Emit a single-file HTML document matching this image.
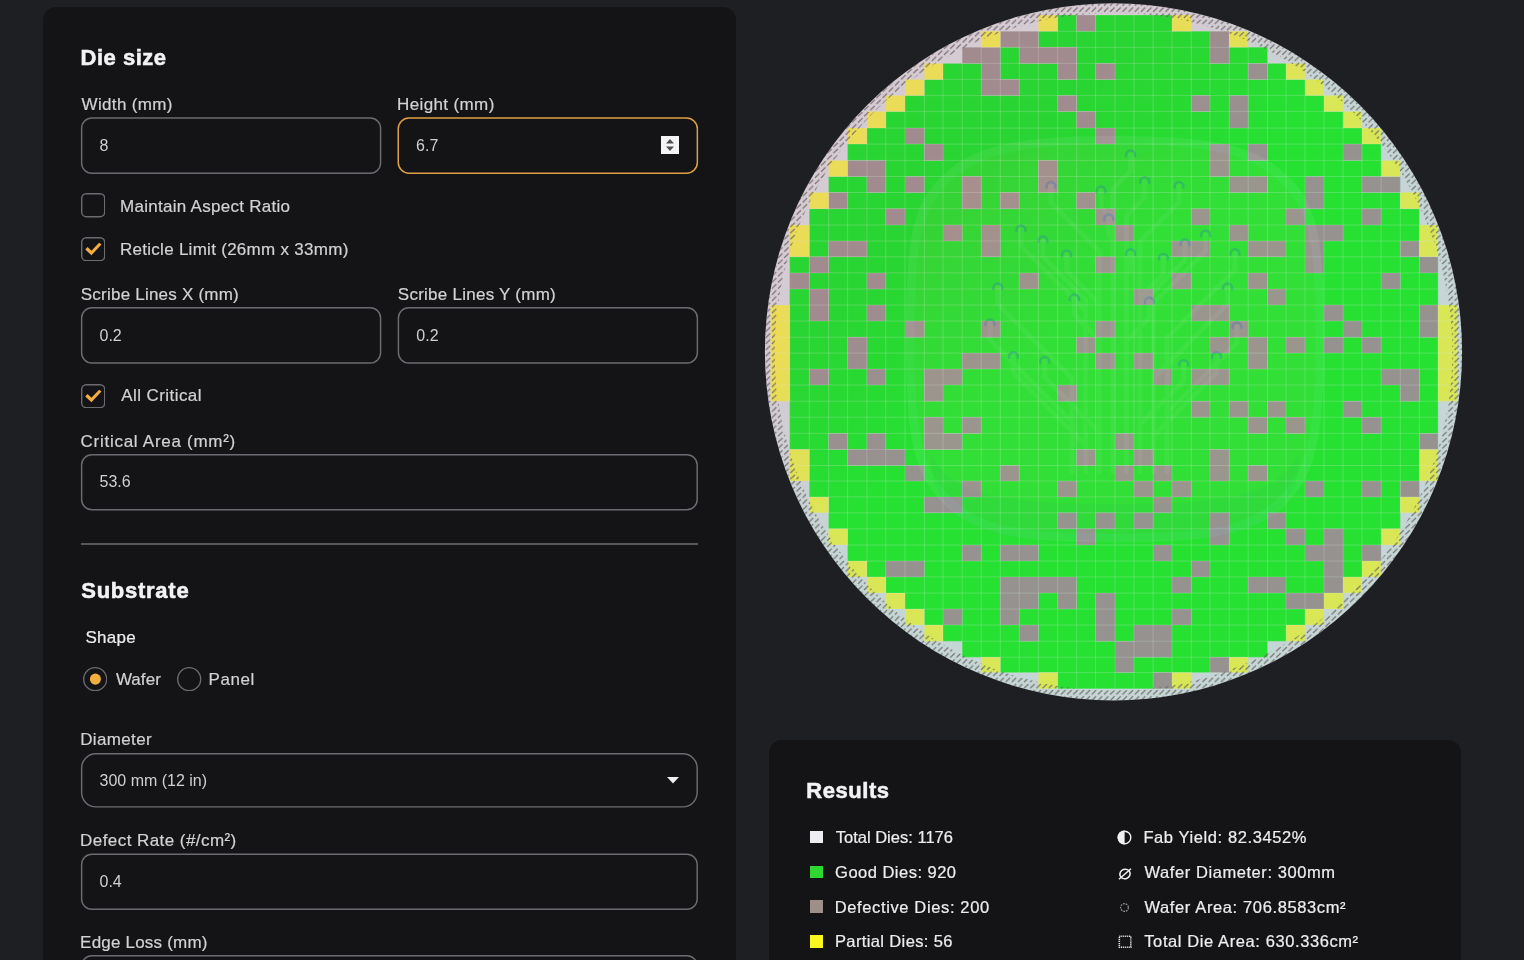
<!DOCTYPE html>
<html lang="en">
<head>
<meta charset="utf-8">
<title>Die Yield Calculator</title>
<style>
*{box-sizing:border-box;margin:0;padding:0}
html,body{width:1524px;height:960px;overflow:hidden;background:#1e1f22}
body{position:relative;will-change:transform;font-family:"Liberation Sans",sans-serif;font-size:17px;color:#cfcfd2;letter-spacing:.22px}
.panel{position:absolute;background:#141416;border-radius:13px}
#left{left:43px;top:7px;width:692.5px;height:1000px}
#res{left:769px;top:740px;width:692px;height:300px}
.abs{position:absolute;white-space:nowrap;line-height:20px}
h2{position:absolute;-webkit-text-stroke:.55px #f3f3f5;font-size:22px;font-weight:bold;color:#f3f3f5;letter-spacing:.32px;line-height:26px;white-space:nowrap}
.lbl{position:absolute;white-space:nowrap;line-height:20px;color:#d2d2d5;-webkit-text-stroke:.2px #d2d2d5}
.val{position:absolute;white-space:nowrap;font-size:16px;letter-spacing:0;line-height:20px;color:#cfcfd2}
.cb{position:absolute;left:81px;width:23.5px;height:23.5px;border:1.3px solid #68686d;border-radius:5.5px}
.cb svg{position:absolute;left:0;top:0}
.rad{position:absolute;width:23.6px;height:23.6px;border:1.3px solid #68686d;border-radius:50%}
.rad i{position:absolute;left:5px;top:5px;width:11px;height:11px;border-radius:50%;background:#f5ab3d}
hr{position:absolute;left:81px;top:543.3px;width:616.5px;height:1.5px;border:0;background:#56565b}
.sq{position:absolute;left:810px;width:12.8px;height:12.4px}
.r{position:absolute;white-space:nowrap;line-height:20px;color:#ededf0;font-size:16.5px;-webkit-text-stroke:.22px #ededf0}
.sq2{font-size:1.25em;line-height:0;position:relative;top:.12em}
.ic{position:absolute}
</style>
</head>
<body>

<div class="panel" id="left"></div>
<div class="panel" id="res"></div>


<svg class="ic" style="left:661px;top:136px" width="18" height="18" viewBox="0 0 18 18"><rect width="18" height="18" fill="#f4f4f6"/><path d="M5 7.5L9 3.1l4 4.4zM5 10.5L9 14.9l4-4.4z" fill="#505052"/></svg>

<svg class="ic" style="left:80.8px;top:193.4px" width="24.4" height="24.4" viewBox="0 0 24.4 24.4"><rect x=".7" y=".7" width="23" height="23" rx="4.6" fill="none" stroke="#6a6c72" stroke-width="1.4"/></svg>

<svg class="ic" style="left:80.8px;top:236.8px" width="24.4" height="24.4" viewBox="0 0 24.4 24.4"><rect x=".7" y=".7" width="23" height="23" rx="4.6" fill="none" stroke="#6a6c72" stroke-width="1.4"/><polygon points="4.26,12.4 6.56,10.1 10.46,13.65 18.1,5.67 20.46,7.62 10.46,18.26" fill="#f4ae3e"/></svg>


<svg class="ic" style="left:80.8px;top:383.8px" width="24.4" height="24.4" viewBox="0 0 24.4 24.4"><rect x=".7" y=".7" width="23" height="23" rx="4.6" fill="none" stroke="#6a6c72" stroke-width="1.4"/><polygon points="4.26,12.4 6.56,10.1 10.46,13.65 18.1,5.67 20.46,7.62 10.46,18.26" fill="#f4ae3e"/></svg>


<hr>

<svg class="ic" style="left:82.95px;top:666.7px" width="24.4" height="24.4" viewBox="0 0 24.4 24.4"><circle cx="12.2" cy="12.2" r="11.5" fill="none" stroke="#6a6c72" stroke-width="1.35"/><circle cx="12.4" cy="12.1" r="5.55" fill="#f4ae3e"/></svg>
<svg class="ic" style="left:177.3px;top:666.7px" width="24.4" height="24.4" viewBox="0 0 24.4 24.4"><circle cx="12.2" cy="12.2" r="11.5" fill="none" stroke="#6a6c72" stroke-width="1.35"/></svg>

<svg class="ic" style="left:666px;top:776px" width="14" height="8" viewBox="0 0 14 8"><path d="M1 1h12L7 7.4z" fill="#f0f0f2"/></svg>



<svg class="ic" style="left:0;top:0" width="740" height="960" viewBox="0 0 740 960">
<rect x="81.62" y="118.02" width="298.95" height="55.15" rx="10.28" fill="none" stroke="#6a6c72" stroke-width="1.45"/>
<rect x="398.25" y="118.05" width="299.10" height="55.10" rx="10.75" fill="none" stroke="#dea046" stroke-width="1.5"/>
<rect x="81.62" y="307.83" width="298.95" height="55.15" rx="10.28" fill="none" stroke="#6a6c72" stroke-width="1.45"/>
<rect x="398.43" y="307.83" width="298.95" height="55.15" rx="10.28" fill="none" stroke="#6a6c72" stroke-width="1.45"/>
<rect x="81.62" y="454.83" width="615.55" height="54.95" rx="10.28" fill="none" stroke="#6a6c72" stroke-width="1.45"/>
<rect x="81.62" y="753.73" width="615.55" height="53.15" rx="14.28" fill="none" stroke="#6a6c72" stroke-width="1.45"/>
<rect x="81.62" y="854.23" width="615.55" height="54.95" rx="10.28" fill="none" stroke="#6a6c72" stroke-width="1.45"/>
<rect x="81.62" y="955.73" width="615.55" height="54.95" rx="10.28" fill="none" stroke="#6a6c72" stroke-width="1.45"/>
</svg>
<div class="val" style="left:99.5px;top:136px">8</div>
<div class="val" style="left:416.1px;top:136px">6.7</div>
<div class="val" style="left:99.5px;top:326px">0.2</div>
<div class="val" style="left:416.3px;top:326px">0.2</div>
<div class="val" style="left:99.5px;top:472px">53.6</div>
<div class="val" style="left:99.5px;top:771px">300 mm (12 in)</div>
<div class="val" style="left:99.5px;top:872px">0.4</div>
<div class="val" style="left:99.5px;top:973px">5</div>
<h2 id="t_die" style="left:80.53px;top:45px;letter-spacing:0.521px;">Die size</h2>
<div id="t_w" class="lbl" style="left:81.55px;top:95px;letter-spacing:0.338px;">Width (mm)</div>
<div id="t_h" class="lbl" style="left:397.11px;top:95px;letter-spacing:0.368px;">Height (mm)</div>
<div id="t_mar" class="lbl" style="left:119.96px;top:197px;letter-spacing:0.283px;">Maintain Aspect Ratio</div>
<div id="t_ret" class="lbl" style="left:119.96px;top:240px;letter-spacing:0.281px;">Reticle Limit (26mm x 33mm)</div>
<div id="t_sx" class="lbl" style="left:80.81px;top:285px;letter-spacing:0.221px;">Scribe Lines X (mm)</div>
<div id="t_sy" class="lbl" style="left:397.81px;top:285px;letter-spacing:0.253px;">Scribe Lines Y (mm)</div>
<div id="t_ac" class="lbl" style="left:121.15px;top:386px;letter-spacing:0.440px;">All Critical</div>
<div id="t_ca" class="lbl" style="left:80.61px;top:432px;letter-spacing:0.721px;">Critical Area (mm²)</div>
<h2 id="t_sub" style="left:81.24px;top:578px;letter-spacing:0.743px;">Substrate</h2>
<div id="t_shape" class="lbl" style="left:85.43px;top:628px;letter-spacing:0.271px;color:#ededf0;-webkit-text-stroke-color:#ededf0">Shape</div>
<div id="t_wafer" class="lbl" style="left:115.88px;top:670px;letter-spacing:0.057px;">Wafer</div>
<div id="t_panel" class="lbl" style="left:208.59px;top:670px;letter-spacing:0.539px;">Panel</div>
<div id="t_dia" class="lbl" style="left:80.13px;top:730px;letter-spacing:0.369px;">Diameter</div>
<div id="t_dr" class="lbl" style="left:80.12px;top:831px;letter-spacing:0.434px;">Defect Rate (#/cm²)</div>
<div id="t_el" class="lbl" style="left:80.12px;top:933px;letter-spacing:0.204px;">Edge Loss (mm)</div>
<h2 id="t_res" style="left:806.33px;top:778px;letter-spacing:0.550px;">Results</h2>
<div id="t_td" class="r" style="left:835.69px;top:827px;letter-spacing:0.012px;">Total Dies: 1176</div>
<div id="t_gd" class="r" style="left:835.08px;top:862px;letter-spacing:0.483px;">Good Dies: 920</div>
<div id="t_dd" class="r" style="left:834.68px;top:897px;letter-spacing:0.633px;">Defective Dies: 200</div>
<div id="t_pd" class="r" style="left:834.96px;top:931px;letter-spacing:0.376px;">Partial Dies: 56</div>
<div id="t_fy" class="r" style="left:1143.40px;top:827px;letter-spacing:0.598px;">Fab Yield: 82.3452%</div>
<div id="t_wd" class="r" style="left:1144.46px;top:862px;letter-spacing:0.577px;">Wafer Diameter: 300mm</div>
<div id="t_wa" class="r" style="left:1144.46px;top:897px;letter-spacing:0.625px;">Wafer Area: 706.8583cm²</div>
<div id="t_ta" class="r" style="left:1144.28px;top:931px;letter-spacing:0.593px;">Total Die Area: 630.336cm²</div>
<svg id="wafer" width="720" height="720" viewBox="750 -8 720 720" style="position:absolute;left:750px;top:-8px">
<defs>
<clipPath id="wc"><circle cx="1113.5" cy="351.8" r="348.6"/></clipPath>
<clipPath id="dc"><path d="M1038.4 15H1191.3V31.25H1038.4zM981.2 31.25H1248.2V47.25H981.2zM962.2 47.25H1267.5V63.4H962.2zM924.3 63.4H1305V79.4H924.3zM905 79.4H1324V95.6H905zM885.8 95.6H1343V111.6H885.8zM866.9 111.6H1362V128.1H866.9zM847.6 128.1H1381.1V144.1H847.6zM847.6 144.1H1381.1V160.4H847.6zM828.6 160.4H1400.3V176.5H828.6zM828.6 176.5H1400.3V192.5H828.6zM809.3 192.5H1419.4V208.75H809.3zM809.3 208.75H1419.4V225H809.3zM789.7 225H1438.1V241H789.7zM789.7 241H1438.1V256.8H789.7zM789.7 256.8H1438.1V272.9H789.7zM789.7 272.9H1438.1V289H789.7zM789.7 289H1438.1V305H789.7zM770.6 305H1457V321H770.6zM770.6 321H1457V337.2H770.6zM770.6 337.2H1457V353.1H770.6zM770.6 353.1H1457V369H770.6zM770.6 369H1457V385H770.6zM770.6 385H1457V401.2H770.6zM789.7 401.2H1438.1V417.2H789.7zM789.7 417.2H1438.1V433.4H789.7zM789.7 433.4H1438.1V449.4H789.7zM789.7 449.4H1438.1V465.5H789.7zM789.7 465.5H1438.1V481H789.7zM809.3 481H1419.4V496.9H809.3zM809.3 496.9H1419.4V512.8H809.3zM828.6 512.8H1400.3V528.8H828.6zM828.6 528.8H1400.3V545H828.6zM847.6 545H1381.1V561H847.6zM847.6 561H1381.1V576.9H847.6zM866.9 576.9H1362V593.1H866.9zM885.8 593.1H1343V609H885.8zM905 609H1324V625H905zM924.3 625H1305V641.2H924.3zM962.2 641.2H1267.5V657.2H962.2zM981.2 657.2H1248.2V672.6H981.2zM1038.4 672.6H1191.3V688.75H1038.4z"/></clipPath>
<pattern id="hatch" width="6.15" height="6.15" patternUnits="userSpaceOnUse" patternTransform="translate(2.3 .4)"><path d="M.85 5.3L5.3 .85" stroke="#6a605e" stroke-opacity=".85" stroke-width="1.15" stroke-linecap="butt"/></pattern>
<linearGradient id="irid" gradientUnits="userSpaceOnUse" x1="881.8" y1="91.1" x2="1345.2" y2="612.5"><stop offset="0" stop-color="#fff3fc"/><stop offset=".2" stop-color="#fff3fc"/><stop offset=".42" stop-color="#edfffe"/><stop offset="1" stop-color="#edfffe"/></linearGradient>
</defs>
<g clip-path="url(#wc)">
<circle cx="1113.5" cy="351.8" r="349.6" fill="#d5d5d6"/>
<path d="M1057.7 15H1076.6V31.25H1057.7zM1095.6 15H1172V31.25H1095.6zM1038.4 31.25H1210V47.25H1038.4zM1000.3 47.25H1019.2V63.4H1000.3zM1076.6 47.25H1210V63.4H1076.6zM1229.2 47.25H1267.5V63.4H1229.2zM943 63.4H981.2V79.4H943zM1000.3 63.4H1057.7V79.4H1000.3zM1076.6 63.4H1095.6V79.4H1076.6zM1115 63.4H1248.2V79.4H1115zM1267.5 63.4H1286V79.4H1267.5zM924.3 79.4H981.2V95.6H924.3zM1019.2 79.4H1305V95.6H1019.2zM905 95.6H1057.7V111.6H905zM1076.6 95.6H1191.3V111.6H1076.6zM1210 95.6H1229.2V111.6H1210zM1248.2 95.6H1324V111.6H1248.2zM885.8 111.6H1076.6V128.1H885.8zM1095.6 111.6H1229.2V128.1H1095.6zM1248.2 111.6H1343V128.1H1248.2zM866.9 128.1H905V144.1H866.9zM924.3 128.1H1095.6V144.1H924.3zM1115 128.1H1362V144.1H1115zM847.6 144.1H924.3V160.4H847.6zM943 144.1H1210V160.4H943zM1229.2 144.1H1248.2V160.4H1229.2zM1267.5 144.1H1343V160.4H1267.5zM1362 144.1H1381.1V160.4H1362zM885.8 160.4H1038.4V176.5H885.8zM1057.7 160.4H1210V176.5H1057.7zM1229.2 160.4H1381.1V176.5H1229.2zM828.6 176.5H866.9V192.5H828.6zM885.8 176.5H905V192.5H885.8zM924.3 176.5H962.2V192.5H924.3zM981.2 176.5H1038.4V192.5H981.2zM1057.7 176.5H1229.2V192.5H1057.7zM1267.5 176.5H1305V192.5H1267.5zM1324 176.5H1362V192.5H1324zM847.6 192.5H962.2V208.75H847.6zM981.2 192.5H1000.3V208.75H981.2zM1019.2 192.5H1076.6V208.75H1019.2zM1095.6 192.5H1305V208.75H1095.6zM1324 192.5H1400.3V208.75H1324zM809.3 208.75H885.8V225H809.3zM905 208.75H1095.6V225H905zM1115 208.75H1191.3V225H1115zM1210 208.75H1286V225H1210zM1305 208.75H1362V225H1305zM1381.1 208.75H1419.4V225H1381.1zM809.3 225H943V241H809.3zM962.2 225H981.2V241H962.2zM1000.3 225H1115V241H1000.3zM1134 225H1229.2V241H1134zM1248.2 225H1305V241H1248.2zM1343 225H1419.4V241H1343zM809.3 241H828.6V256.8H809.3zM866.9 241H981.2V256.8H866.9zM1000.3 241H1172V256.8H1000.3zM1210 241H1248.2V256.8H1210zM1286 241H1305V256.8H1286zM1324 241H1400.3V256.8H1324zM789.7 256.8H809.3V272.9H789.7zM828.6 256.8H1095.6V272.9H828.6zM1115 256.8H1305V272.9H1115zM1324 256.8H1419.4V272.9H1324zM809.3 272.9H866.9V289H809.3zM885.8 272.9H1019.2V289H885.8zM1038.4 272.9H1172V289H1038.4zM1191.3 272.9H1248.2V289H1191.3zM1267.5 272.9H1381.1V289H1267.5zM1400.3 272.9H1438.1V289H1400.3zM789.7 289H809.3V305H789.7zM828.6 289H1134V305H828.6zM1153.1 289H1267.5V305H1153.1zM1286 289H1438.1V305H1286zM789.7 305H809.3V321H789.7zM828.6 305H866.9V321H828.6zM885.8 305H1191.3V321H885.8zM1229.2 305H1324V321H1229.2zM1343 305H1419.4V321H1343zM789.7 321H905V337.2H789.7zM924.3 321H981.2V337.2H924.3zM1000.3 321H1095.6V337.2H1000.3zM1115 321H1229.2V337.2H1115zM1248.2 321H1343V337.2H1248.2zM1362 321H1419.4V337.2H1362zM789.7 337.2H847.6V353.1H789.7zM866.9 337.2H1076.6V353.1H866.9zM1095.6 337.2H1210V353.1H1095.6zM1229.2 337.2H1248.2V353.1H1229.2zM1267.5 337.2H1286V353.1H1267.5zM1305 337.2H1324V353.1H1305zM1343 337.2H1362V353.1H1343zM1381.1 337.2H1438.1V353.1H1381.1zM789.7 353.1H847.6V369H789.7zM866.9 353.1H962.2V369H866.9zM1000.3 353.1H1095.6V369H1000.3zM1115 353.1H1134V369H1115zM1153.1 353.1H1248.2V369H1153.1zM1267.5 353.1H1438.1V369H1267.5zM789.7 369H809.3V385H789.7zM828.6 369H866.9V385H828.6zM885.8 369H924.3V385H885.8zM962.2 369H1153.1V385H962.2zM1172 369H1191.3V385H1172zM1229.2 369H1381.1V385H1229.2zM1419.4 369H1438.1V385H1419.4zM789.7 385H924.3V401.2H789.7zM943 385H1057.7V401.2H943zM1076.6 385H1400.3V401.2H1076.6zM1419.4 385H1438.1V401.2H1419.4zM789.7 401.2H1191.3V417.2H789.7zM1210 401.2H1229.2V417.2H1210zM1248.2 401.2H1267.5V417.2H1248.2zM1286 401.2H1343V417.2H1286zM1362 401.2H1438.1V417.2H1362zM789.7 417.2H924.3V433.4H789.7zM943 417.2H962.2V433.4H943zM981.2 417.2H1248.2V433.4H981.2zM1267.5 417.2H1286V433.4H1267.5zM1305 417.2H1362V433.4H1305zM1381.1 417.2H1438.1V433.4H1381.1zM789.7 433.4H828.6V449.4H789.7zM847.6 433.4H866.9V449.4H847.6zM885.8 433.4H924.3V449.4H885.8zM962.2 433.4H1115V449.4H962.2zM1134 433.4H1419.4V449.4H1134zM809.3 449.4H847.6V465.5H809.3zM905 449.4H1076.6V465.5H905zM1095.6 449.4H1134V465.5H1095.6zM1153.1 449.4H1210V465.5H1153.1zM1229.2 449.4H1419.4V465.5H1229.2zM809.3 465.5H905V481H809.3zM924.3 465.5H1000.3V481H924.3zM1019.2 465.5H1115V481H1019.2zM1134 465.5H1153.1V481H1134zM1172 465.5H1210V481H1172zM1229.2 465.5H1248.2V481H1229.2zM1267.5 465.5H1419.4V481H1267.5zM809.3 481H962.2V496.9H809.3zM981.2 481H1057.7V496.9H981.2zM1076.6 481H1134V496.9H1076.6zM1153.1 481H1172V496.9H1153.1zM1191.3 481H1305V496.9H1191.3zM1324 481H1362V496.9H1324zM1381.1 481H1400.3V496.9H1381.1zM828.6 496.9H924.3V512.8H828.6zM962.2 496.9H1153.1V512.8H962.2zM1172 496.9H1400.3V512.8H1172zM828.6 512.8H1057.7V528.8H828.6zM1076.6 512.8H1095.6V528.8H1076.6zM1115 512.8H1134V528.8H1115zM1153.1 512.8H1210V528.8H1153.1zM1229.2 512.8H1267.5V528.8H1229.2zM1286 512.8H1400.3V528.8H1286zM847.6 528.8H1076.6V545H847.6zM1095.6 528.8H1210V545H1095.6zM1229.2 528.8H1286V545H1229.2zM1305 528.8H1324V545H1305zM1343 528.8H1381.1V545H1343zM847.6 545H962.2V561H847.6zM981.2 545H1000.3V561H981.2zM1038.4 545H1153.1V561H1038.4zM1172 545H1305V561H1172zM1343 545H1362V561H1343zM866.9 561H885.8V576.9H866.9zM924.3 561H1191.3V576.9H924.3zM1210 561H1324V576.9H1210zM1343 561H1362V576.9H1343zM885.8 576.9H1000.3V593.1H885.8zM1076.6 576.9H1172V593.1H1076.6zM1191.3 576.9H1248.2V593.1H1191.3zM1286 576.9H1324V593.1H1286zM905 593.1H1000.3V609H905zM1038.4 593.1H1057.7V609H1038.4zM1076.6 593.1H1095.6V609H1076.6zM1115 593.1H1286V609H1115zM924.3 609H943V625H924.3zM962.2 609H1000.3V625H962.2zM1019.2 609H1095.6V625H1019.2zM1115 609H1172V625H1115zM1191.3 609H1305V625H1191.3zM943 625H1019.2V641.2H943zM1038.4 625H1095.6V641.2H1038.4zM1115 625H1134V641.2H1115zM1172 625H1286V641.2H1172zM962.2 641.2H1115V657.2H962.2zM1172 641.2H1267.5V657.2H1172zM1000.3 657.2H1115V672.6H1000.3zM1134 657.2H1210V672.6H1134zM1057.7 672.6H1153.1V688.75H1057.7z" fill="#29e032"/>
<path d="M1076.6 15H1095.6V31.25H1076.6zM1000.3 31.25H1038.4V47.25H1000.3zM1210 31.25H1229.2V47.25H1210zM962.2 47.25H1000.3V63.4H962.2zM1019.2 47.25H1076.6V63.4H1019.2zM1210 47.25H1229.2V63.4H1210zM981.2 63.4H1000.3V79.4H981.2zM1057.7 63.4H1076.6V79.4H1057.7zM1095.6 63.4H1115V79.4H1095.6zM1248.2 63.4H1267.5V79.4H1248.2zM981.2 79.4H1019.2V95.6H981.2zM1057.7 95.6H1076.6V111.6H1057.7zM1191.3 95.6H1210V111.6H1191.3zM1229.2 95.6H1248.2V111.6H1229.2zM1076.6 111.6H1095.6V128.1H1076.6zM1229.2 111.6H1248.2V128.1H1229.2zM905 128.1H924.3V144.1H905zM1095.6 128.1H1115V144.1H1095.6zM924.3 144.1H943V160.4H924.3zM1210 144.1H1229.2V160.4H1210zM1248.2 144.1H1267.5V160.4H1248.2zM1343 144.1H1362V160.4H1343zM847.6 160.4H885.8V176.5H847.6zM1038.4 160.4H1057.7V176.5H1038.4zM1210 160.4H1229.2V176.5H1210zM866.9 176.5H885.8V192.5H866.9zM905 176.5H924.3V192.5H905zM962.2 176.5H981.2V192.5H962.2zM1038.4 176.5H1057.7V192.5H1038.4zM1229.2 176.5H1267.5V192.5H1229.2zM1305 176.5H1324V192.5H1305zM1362 176.5H1400.3V192.5H1362zM828.6 192.5H847.6V208.75H828.6zM962.2 192.5H981.2V208.75H962.2zM1000.3 192.5H1019.2V208.75H1000.3zM1076.6 192.5H1095.6V208.75H1076.6zM1305 192.5H1324V208.75H1305zM885.8 208.75H905V225H885.8zM1095.6 208.75H1115V225H1095.6zM1191.3 208.75H1210V225H1191.3zM1286 208.75H1305V225H1286zM1362 208.75H1381.1V225H1362zM943 225H962.2V241H943zM981.2 225H1000.3V241H981.2zM1115 225H1134V241H1115zM1229.2 225H1248.2V241H1229.2zM1305 225H1343V241H1305zM828.6 241H866.9V256.8H828.6zM981.2 241H1000.3V256.8H981.2zM1172 241H1210V256.8H1172zM1248.2 241H1286V256.8H1248.2zM1305 241H1324V256.8H1305zM1400.3 241H1419.4V256.8H1400.3zM809.3 256.8H828.6V272.9H809.3zM1095.6 256.8H1115V272.9H1095.6zM1305 256.8H1324V272.9H1305zM1419.4 256.8H1438.1V272.9H1419.4zM789.7 272.9H809.3V289H789.7zM866.9 272.9H885.8V289H866.9zM1019.2 272.9H1038.4V289H1019.2zM1172 272.9H1191.3V289H1172zM1248.2 272.9H1267.5V289H1248.2zM1381.1 272.9H1400.3V289H1381.1zM809.3 289H828.6V305H809.3zM1134 289H1153.1V305H1134zM1267.5 289H1286V305H1267.5zM809.3 305H828.6V321H809.3zM866.9 305H885.8V321H866.9zM1191.3 305H1229.2V321H1191.3zM1324 305H1343V321H1324zM1419.4 305H1438.1V321H1419.4zM905 321H924.3V337.2H905zM981.2 321H1000.3V337.2H981.2zM1095.6 321H1115V337.2H1095.6zM1229.2 321H1248.2V337.2H1229.2zM1343 321H1362V337.2H1343zM1419.4 321H1438.1V337.2H1419.4zM847.6 337.2H866.9V353.1H847.6zM1076.6 337.2H1095.6V353.1H1076.6zM1210 337.2H1229.2V353.1H1210zM1248.2 337.2H1267.5V353.1H1248.2zM1286 337.2H1305V353.1H1286zM1324 337.2H1343V353.1H1324zM1362 337.2H1381.1V353.1H1362zM847.6 353.1H866.9V369H847.6zM962.2 353.1H1000.3V369H962.2zM1095.6 353.1H1115V369H1095.6zM1134 353.1H1153.1V369H1134zM1248.2 353.1H1267.5V369H1248.2zM809.3 369H828.6V385H809.3zM866.9 369H885.8V385H866.9zM924.3 369H962.2V385H924.3zM1153.1 369H1172V385H1153.1zM1191.3 369H1229.2V385H1191.3zM1381.1 369H1419.4V385H1381.1zM924.3 385H943V401.2H924.3zM1057.7 385H1076.6V401.2H1057.7zM1400.3 385H1419.4V401.2H1400.3zM1191.3 401.2H1210V417.2H1191.3zM1229.2 401.2H1248.2V417.2H1229.2zM1267.5 401.2H1286V417.2H1267.5zM1343 401.2H1362V417.2H1343zM924.3 417.2H943V433.4H924.3zM962.2 417.2H981.2V433.4H962.2zM1248.2 417.2H1267.5V433.4H1248.2zM1286 417.2H1305V433.4H1286zM1362 417.2H1381.1V433.4H1362zM828.6 433.4H847.6V449.4H828.6zM866.9 433.4H885.8V449.4H866.9zM924.3 433.4H962.2V449.4H924.3zM1115 433.4H1134V449.4H1115zM1419.4 433.4H1438.1V449.4H1419.4zM847.6 449.4H905V465.5H847.6zM1076.6 449.4H1095.6V465.5H1076.6zM1134 449.4H1153.1V465.5H1134zM1210 449.4H1229.2V465.5H1210zM905 465.5H924.3V481H905zM1000.3 465.5H1019.2V481H1000.3zM1115 465.5H1134V481H1115zM1153.1 465.5H1172V481H1153.1zM1210 465.5H1229.2V481H1210zM1248.2 465.5H1267.5V481H1248.2zM962.2 481H981.2V496.9H962.2zM1057.7 481H1076.6V496.9H1057.7zM1134 481H1153.1V496.9H1134zM1172 481H1191.3V496.9H1172zM1305 481H1324V496.9H1305zM1362 481H1381.1V496.9H1362zM1400.3 481H1419.4V496.9H1400.3zM924.3 496.9H962.2V512.8H924.3zM1153.1 496.9H1172V512.8H1153.1zM1057.7 512.8H1076.6V528.8H1057.7zM1095.6 512.8H1115V528.8H1095.6zM1134 512.8H1153.1V528.8H1134zM1210 512.8H1229.2V528.8H1210zM1267.5 512.8H1286V528.8H1267.5zM1076.6 528.8H1095.6V545H1076.6zM1210 528.8H1229.2V545H1210zM1286 528.8H1305V545H1286zM1324 528.8H1343V545H1324zM962.2 545H981.2V561H962.2zM1000.3 545H1038.4V561H1000.3zM1153.1 545H1172V561H1153.1zM1305 545H1343V561H1305zM1362 545H1381.1V561H1362zM885.8 561H924.3V576.9H885.8zM1191.3 561H1210V576.9H1191.3zM1324 561H1343V576.9H1324zM1000.3 576.9H1076.6V593.1H1000.3zM1172 576.9H1191.3V593.1H1172zM1248.2 576.9H1286V593.1H1248.2zM1324 576.9H1343V593.1H1324zM1000.3 593.1H1038.4V609H1000.3zM1057.7 593.1H1076.6V609H1057.7zM1095.6 593.1H1115V609H1095.6zM1286 593.1H1324V609H1286zM943 609H962.2V625H943zM1000.3 609H1019.2V625H1000.3zM1095.6 609H1115V625H1095.6zM1172 609H1191.3V625H1172zM1019.2 625H1038.4V641.2H1019.2zM1095.6 625H1115V641.2H1095.6zM1134 625H1172V641.2H1134zM1115 641.2H1172V657.2H1115zM1115 657.2H1134V672.6H1115zM1210 657.2H1229.2V672.6H1210zM1153.1 672.6H1172V688.75H1153.1z" fill="#a19290"/>
<path d="M1038.4 15H1057.7V31.25H1038.4zM1172 15H1191.3V31.25H1172zM981.2 31.25H1000.3V47.25H981.2zM1229.2 31.25H1248.2V47.25H1229.2zM924.3 63.4H943V79.4H924.3zM1286 63.4H1305V79.4H1286zM905 79.4H924.3V95.6H905zM1305 79.4H1324V95.6H1305zM885.8 95.6H905V111.6H885.8zM1324 95.6H1343V111.6H1324zM866.9 111.6H885.8V128.1H866.9zM1343 111.6H1362V128.1H1343zM847.6 128.1H866.9V144.1H847.6zM1362 128.1H1381.1V144.1H1362zM828.6 160.4H847.6V176.5H828.6zM1381.1 160.4H1400.3V176.5H1381.1zM809.3 192.5H828.6V208.75H809.3zM1400.3 192.5H1419.4V208.75H1400.3zM789.7 225H809.3V241H789.7zM1419.4 225H1438.1V241H1419.4zM789.7 241H809.3V256.8H789.7zM1419.4 241H1438.1V256.8H1419.4zM770.6 305H789.7V321H770.6zM1438.1 305H1457V321H1438.1zM770.6 321H789.7V337.2H770.6zM1438.1 321H1457V337.2H1438.1zM770.6 337.2H789.7V353.1H770.6zM1438.1 337.2H1457V353.1H1438.1zM770.6 353.1H789.7V369H770.6zM1438.1 353.1H1457V369H1438.1zM770.6 369H789.7V385H770.6zM1438.1 369H1457V385H1438.1zM770.6 385H789.7V401.2H770.6zM1438.1 385H1457V401.2H1438.1zM789.7 449.4H809.3V465.5H789.7zM1419.4 449.4H1438.1V465.5H1419.4zM789.7 465.5H809.3V481H789.7zM1419.4 465.5H1438.1V481H1419.4zM809.3 496.9H828.6V512.8H809.3zM1400.3 496.9H1419.4V512.8H1400.3zM828.6 528.8H847.6V545H828.6zM1381.1 528.8H1400.3V545H1381.1zM847.6 561H866.9V576.9H847.6zM1362 561H1381.1V576.9H1362zM866.9 576.9H885.8V593.1H866.9zM1343 576.9H1362V593.1H1343zM885.8 593.1H905V609H885.8zM1324 593.1H1343V609H1324zM905 609H924.3V625H905zM1305 609H1324V625H1305zM924.3 625H943V641.2H924.3zM1286 625H1305V641.2H1286zM981.2 657.2H1000.3V672.6H981.2zM1229.2 657.2H1248.2V672.6H1229.2zM1038.4 672.6H1057.7V688.75H1038.4zM1172 672.6H1191.3V688.75H1172z" fill="#eae757"/>
<path d="M770.6 15V688.75M789.7 15V688.75M809.3 15V688.75M828.6 15V688.75M847.6 15V688.75M866.9 15V688.75M885.8 15V688.75M905 15V688.75M924.3 15V688.75M943 15V688.75M962.2 15V688.75M981.2 15V688.75M1000.3 15V688.75M1019.2 15V688.75M1038.4 15V688.75M1057.7 15V688.75M1076.6 15V688.75M1095.6 15V688.75M1115 15V688.75M1134 15V688.75M1153.1 15V688.75M1172 15V688.75M1191.3 15V688.75M1210 15V688.75M1229.2 15V688.75M1248.2 15V688.75M1267.5 15V688.75M1286 15V688.75M1305 15V688.75M1324 15V688.75M1343 15V688.75M1362 15V688.75M1381.1 15V688.75M1400.3 15V688.75M1419.4 15V688.75M1438.1 15V688.75M1457 15V688.75M770.6 15H1457M770.6 31.25H1457M770.6 47.25H1457M770.6 63.4H1457M770.6 79.4H1457M770.6 95.6H1457M770.6 111.6H1457M770.6 128.1H1457M770.6 144.1H1457M770.6 160.4H1457M770.6 176.5H1457M770.6 192.5H1457M770.6 208.75H1457M770.6 225H1457M770.6 241H1457M770.6 256.8H1457M770.6 272.9H1457M770.6 289H1457M770.6 305H1457M770.6 321H1457M770.6 337.2H1457M770.6 353.1H1457M770.6 369H1457M770.6 385H1457M770.6 401.2H1457M770.6 417.2H1457M770.6 433.4H1457M770.6 449.4H1457M770.6 465.5H1457M770.6 481H1457M770.6 496.9H1457M770.6 512.8H1457M770.6 528.8H1457M770.6 545H1457M770.6 561H1457M770.6 576.9H1457M770.6 593.1H1457M770.6 609H1457M770.6 625H1457M770.6 641.2H1457M770.6 657.2H1457M770.6 672.6H1457M770.6 688.75H1457" stroke="#e8f0e8" stroke-opacity=".24" stroke-width="1" fill="none" clip-path="url(#dc)"/>
<path d="M1115 136C1230 136 1262 150 1292 180C1320 210 1324 250 1324 338C1324 430 1318 470 1290 500C1258 534 1220 542 1115 542C1010 542 972 534 940 500C912 470 906 430 906 338C906 250 910 210 938 180C968 150 1000 136 1115 136zM1115 144.53C1225.17 144.53 1255.83 157.94 1284.57 186.68C1311.39 215.42 1315.22 253.74 1315.22 338.04C1315.22 426.18 1309.47 464.5 1282.65 493.24C1251.99 525.81 1215.59 533.47 1115 533.47C1014.41 533.47 978.01 525.81 947.35 493.24C920.53 464.5 914.78 426.18 914.78 338.04C914.78 253.74 918.61 215.42 945.43 186.68C974.17 157.94 1004.83 144.53 1115 144.53z" fill-rule="evenodd" fill="#ffffff" fill-opacity=".075"/><path d="M1115 144.53C1225.17 144.53 1255.83 157.94 1284.57 186.68C1311.39 215.42 1315.22 253.74 1315.22 338.04C1315.22 426.18 1309.47 464.5 1282.65 493.24C1251.99 525.81 1215.59 533.47 1115 533.47C1014.41 533.47 978.01 525.81 947.35 493.24C920.53 464.5 914.78 426.18 914.78 338.04C914.78 253.74 918.61 215.42 945.43 186.68C974.17 157.94 1004.83 144.53 1115 144.53z" fill="#ffe178" fill-opacity=".06"/><path d="M930 452C950 492 990 504 1115 504C1240 504 1280 492 1300 452C1300 500 1270 528 1220 536C1180 542 1050 542 1010 536C960 528 930 500 930 452z" fill="#2060d0" fill-opacity=".038"/><path d="M990 324V340L1072 422V472M997.8 288V304L1072 378.2V472M1013.4 356.8V372.8L1085.6 445V472M1021 230V246L1085.6 310.6V472M1043 241V257L1085.6 299.6V472M1044.7 361.5V377.5L1099.2 432V472M1051 186.5V202.5L1099.2 250.7V472M1066.6 255V271L1099.2 303.6V472M1074.4 299V315L1099.2 339.8V472M1101 191V207L1112.8 218.8V472M1108.8 219V235L1112.8 239V472M1130.6 155V171L1112.8 188.8V472M1130.6 253.7V269.7L1126.4 273.9V472M1144.7 181.8V197.8L1126.4 216.1V472M1149.4 302V318L1126.4 341V472M1163.4 258.4V274.4L1140 297.8V472M1179 186.5V202.5L1140 241.5V472M1183.75 364.6V380.6L1140 424.35V472M1185 244V260L1140 305V472M1205.6 235V251L1153.6 303V472M1216.6 356.8V372.8L1153.6 435.8V472M1227.5 288V304L1153.6 377.9V472M1235 253.7V269.7L1167.2 337.5V472M1236.9 327V343L1167.2 412.7V472" stroke="#fff" stroke-opacity=".055" stroke-width="5" fill="none" stroke-linejoin="round" stroke-linecap="round"/><path d="M1126.1 156v-1a4.5 4.5 0 0 1 9 0v1M1140.2 182.8v-1a4.5 4.5 0 0 1 9 0v1M1174.5 187.5v-1a4.5 4.5 0 0 1 9 0v1M1046.5 187.5v-1a4.5 4.5 0 0 1 9 0v1M1096.5 192v-1a4.5 4.5 0 0 1 9 0v1M1104.3 220v-1a4.5 4.5 0 0 1 9 0v1M1016.5 231v-1a4.5 4.5 0 0 1 9 0v1M1038.5 242v-1a4.5 4.5 0 0 1 9 0v1M1062.1 256v-1a4.5 4.5 0 0 1 9 0v1M1126.1 254.7v-1a4.5 4.5 0 0 1 9 0v1M1158.9 259.4v-1a4.5 4.5 0 0 1 9 0v1M1180.5 245v-1a4.5 4.5 0 0 1 9 0v1M1201.1 236v-1a4.5 4.5 0 0 1 9 0v1M1230.5 254.7v-1a4.5 4.5 0 0 1 9 0v1M993.3 289v-1a4.5 4.5 0 0 1 9 0v1M1069.9 300v-1a4.5 4.5 0 0 1 9 0v1M1144.9 303v-1a4.5 4.5 0 0 1 9 0v1M1223 289v-1a4.5 4.5 0 0 1 9 0v1M985.5 325v-1a4.5 4.5 0 0 1 9 0v1M1232.4 328v-1a4.5 4.5 0 0 1 9 0v1M1008.9 357.8v-1a4.5 4.5 0 0 1 9 0v1M1040.2 362.5v-1a4.5 4.5 0 0 1 9 0v1M1179.25 365.6v-1a4.5 4.5 0 0 1 9 0v1M1212.1 357.8v-1a4.5 4.5 0 0 1 9 0v1" stroke="#2f74c8" stroke-opacity=".3" stroke-width="2.4" fill="none" stroke-linecap="round"/>
<circle cx="1113.5" cy="351.8" r="343.7" fill="none" stroke="url(#hatch)" stroke-width="9.8"/>
<circle cx="1113.5" cy="351.8" r="349.6" fill="url(#irid)" style="mix-blend-mode:multiply"/>
</g></svg>


<div class="sq" style="top:830.8px;background:#ededf2"></div>
<div class="sq" style="top:865.6px;background:#2fd731"></div>
<div class="sq" style="top:900.4px;background:#9e9088"></div>
<div class="sq" style="top:935.2px;background:#f8f820"></div>

<svg class="ic" style="left:1117.35px;top:829.7px" width="15" height="15" viewBox="0 0 15 15"><circle cx="7.5" cy="7.5" r="6.3" fill="none" stroke="#f0f0f2" stroke-width="1.4"/><path d="M7.6 .5a7 7 0 0 0 0 14z" fill="#f0f0f2"/></svg>

<svg class="ic" style="left:1116.8px;top:865.6px" width="16" height="16" viewBox="0 0 16 16"><ellipse cx="8" cy="8" rx="5.2" ry="4.7" transform="rotate(-20 8 8)" fill="none" stroke="#f0f0f2" stroke-width="1.55"/><path d="M2 13.2L13.9 2.8" stroke="#f0f0f2" stroke-width="1.5"/></svg>

<svg class="ic" style="left:1119px;top:902.3px" width="11" height="11" viewBox="0 0 11 11"><circle cx="5.5" cy="5.5" r="3.85" fill="none" stroke="#9a9aa0" stroke-width="1.2" stroke-dasharray="1.7 1.0"/></svg>

<svg class="ic" style="left:1117.6px;top:935.1px" width="14" height="14" viewBox="0 0 14 14"><rect x="1.3" y="1.3" width="11.5" height="10.9" fill="none" stroke="#e4e4ea" stroke-width="1.6" stroke-dasharray="1.15 .8"/></svg>

</body>
</html>
